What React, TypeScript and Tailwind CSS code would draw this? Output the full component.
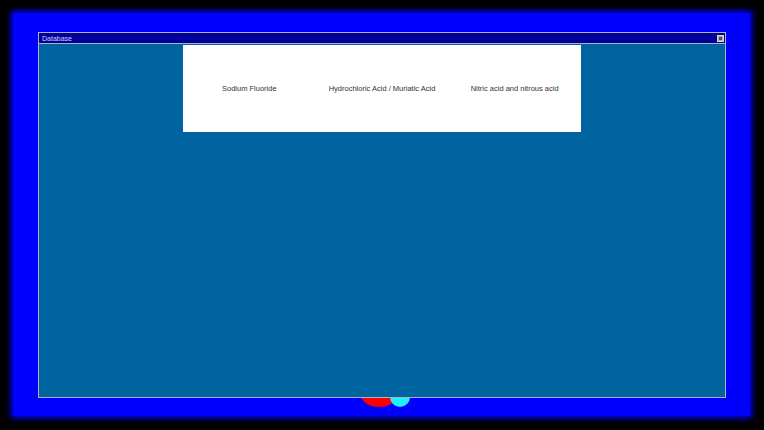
import React from "react";

export default function App() {
  const items = [
    "Sodium Fluoride",
    "Hydrochloric Acid / Muriatic Acid",
    "Nitric acid and nitrous acid",
  ];
  return (
    <div
      className="w-[764px] h-[430px] bg-black overflow-hidden pt-[13px] pl-[13px]"
      style={{ fontFamily: '"Liberation Sans", Arial, sans-serif' }}
    >
      <div className="relative w-[737px] h-[403px] bg-[#0000ff] shadow-[0_0_6px_2px_#0000ff] pt-[19px] pl-[25px]">
        {/* decorative circles behind the window */}
        <div className="absolute left-[347px] top-[366px] w-[38px] h-[28px] rounded-[50%] bg-[#ff0000]" />
        <div className="absolute left-[377px] top-[374px] w-[20px] h-[20px] rounded-full bg-[#22eeff]" />
        <div className="relative flex flex-col w-[688px] h-[366px] border border-[#b0b0c8] bg-[#0064a0]">
          <div className="flex items-center justify-between h-[10px] bg-[#00009a] pl-[3px] pr-[1px]">
            <span className="text-[7px] leading-none text-[#d0d0ff]">Database</span>
            <div className="w-[7px] h-[7px] bg-[#b0b0b0] border border-[#d8d8d8] flex items-center justify-center">
              <div className="w-[3px] h-[3px] bg-[#505050]" />
            </div>
          </div>
          <div className="h-px bg-[#b0b0c8]" />
          <div className="flex-1 pl-[144px] pt-px">
            <div className="w-[398px] h-[87px] bg-white grid grid-cols-3 items-center">
              {items.map((t) => (
                <div key={t} className="text-center text-[7.5px] text-[#333333]">
                  {t}
                </div>
              ))}
            </div>
          </div>
        </div>
      </div>
    </div>
  );
}
